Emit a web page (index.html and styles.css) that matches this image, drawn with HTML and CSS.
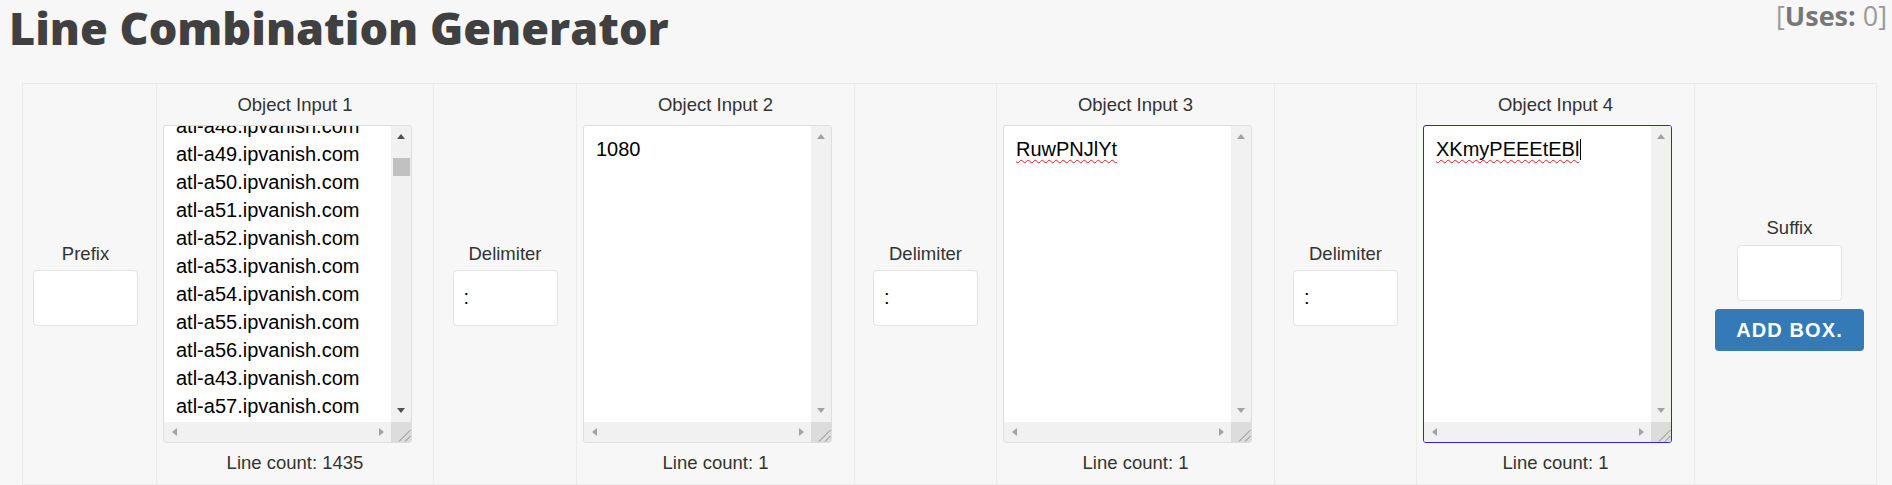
FILE: index.html
```html
<!DOCTYPE html>
<html lang="en">
<head>
    <meta charset="UTF-8">
    <title>Line Combination Generator</title>
    <link rel="stylesheet" href="styles.css">
</head>
<body>
    <div class="header">
        <h1 class="title">Line Combination Generator</h1>
        <div class="uses">[<b>Uses:</b> 0]</div>
    </div>

    <div class="generator">
        <!-- prefix -->
        <div class="cell cell-prefix">
            <label class="field-label" for="prefix">Prefix</label>
            <input class="small-input" type="text" id="prefix">
        </div>

        <!-- object 1 -->
        <div class="cell cell-object">
            <div class="field-label">Object Input 1</div>
            <div class="textbox">
                <div class="textbox-content"><div class="lines scrolled">atl-a48.ipvanish.com
atl-a49.ipvanish.com
atl-a50.ipvanish.com
atl-a51.ipvanish.com
atl-a52.ipvanish.com
atl-a53.ipvanish.com
atl-a54.ipvanish.com
atl-a55.ipvanish.com
atl-a56.ipvanish.com
atl-a43.ipvanish.com
atl-a57.ipvanish.com</div></div>
                <div class="vbar active">
                    <span class="sb-btn up"></span>
                    <div class="track"><div class="thumb"></div></div>
                    <span class="sb-btn down"></span>
                </div>
                <div class="hbar">
                    <span class="sb-btn left"></span>
                    <span class="sb-btn right"></span>
                </div>
                <div class="resizer">
                    <svg width="20" height="20" viewBox="0 0 20 20"><path d="M8 19.5 L19.5 8 M14 19.5 L19.5 14" stroke="#888" stroke-width="1" fill="none"/></svg>
                </div>
            </div>
            <div class="line-count">Line count: 1435</div>
        </div>

        <div class="cell">
            <label class="field-label">Delimiter</label>
            <input class="small-input" type="text" value=":">
        </div>

        <!-- object 2 -->
        <div class="cell cell-object">
            <div class="field-label">Object Input 2</div>
            <div class="textbox">
                <div class="textbox-content"><div class="lines">1080</div></div>
                <div class="vbar">
                    <span class="sb-btn up"></span>
                    <div class="track"></div>
                    <span class="sb-btn down"></span>
                </div>
                <div class="hbar">
                    <span class="sb-btn left"></span>
                    <span class="sb-btn right"></span>
                </div>
                <div class="resizer">
                    <svg width="20" height="20" viewBox="0 0 20 20"><path d="M8 19.5 L19.5 8 M14 19.5 L19.5 14" stroke="#888" stroke-width="1" fill="none"/></svg>
                </div>
            </div>
            <div class="line-count">Line count: 1</div>
        </div>

        <div class="cell">
            <label class="field-label">Delimiter</label>
            <input class="small-input" type="text" value=":">
        </div>

        <!-- object 3 -->
        <div class="cell cell-object">
            <div class="field-label">Object Input 3</div>
            <div class="textbox">
                <div class="textbox-content"><div class="lines"><span class="typo">RuwPNJlYt</span></div></div>
                <div class="vbar">
                    <span class="sb-btn up"></span>
                    <div class="track"></div>
                    <span class="sb-btn down"></span>
                </div>
                <div class="hbar">
                    <span class="sb-btn left"></span>
                    <span class="sb-btn right"></span>
                </div>
                <div class="resizer">
                    <svg width="20" height="20" viewBox="0 0 20 20"><path d="M8 19.5 L19.5 8 M14 19.5 L19.5 14" stroke="#888" stroke-width="1" fill="none"/></svg>
                </div>
            </div>
            <div class="line-count">Line count: 1</div>
        </div>

        <div class="cell">
            <label class="field-label">Delimiter</label>
            <input class="small-input" type="text" value=":">
        </div>

        <!-- object 4 (focused) -->
        <div class="cell cell-object">
            <div class="field-label">Object Input 4</div>
            <div class="textbox focused">
                <div class="textbox-content"><div class="lines"><span class="typo">XKmyPEEEtEBl</span><span class="caret"></span></div></div>
                <div class="vbar">
                    <span class="sb-btn up"></span>
                    <div class="track"></div>
                    <span class="sb-btn down"></span>
                </div>
                <div class="hbar">
                    <span class="sb-btn left"></span>
                    <span class="sb-btn right"></span>
                </div>
                <div class="resizer">
                    <svg width="20" height="20" viewBox="0 0 20 20"><path d="M8 19.5 L19.5 8 M14 19.5 L19.5 14" stroke="#888" stroke-width="1" fill="none"/></svg>
                </div>
            </div>
            <div class="line-count">Line count: 1</div>
        </div>

        <!-- suffix -->
        <div class="cell cell-suffix">
            <label class="field-label" for="suffix">Suffix</label>
            <input class="small-input" type="text" id="suffix">
            <button class="add-btn">ADD BOX.</button>
        </div>
    </div>
</body>
</html>
```

FILE: styles.css
```css
* {
    box-sizing: border-box;
}

body {
    margin: 0;
    padding: 0 5px 0 9px;
    background-color: #f7f7f7;
    color: #333;
    font-family: "Liberation Sans", Arial, sans-serif;
}

.header {
    display: flex;
    justify-content: space-between;
    align-items: flex-start;
}

.title {
    margin: 0;
    font-family: "Open Sans", sans-serif;
    font-weight: 800;
    font-size: 45px;
    line-height: 56px;
    color: #404040;
}

.uses {
    margin-top: 0;
    font-family: "Open Sans", sans-serif;
    font-size: 27px;
    line-height: 31px;
    color: #9a9a9a;
}

.uses b {
    color: #777;
}

/* main row of boxes */
.generator {
    display: grid;
    grid-template-columns: 134px 277px 143px 278px 142px 278px 142px 278px 182px;
    grid-template-rows: 401px;
    margin: 27px 10px 0 13px;
    border-top: 1px solid #ebebeb;
    border-left: 1px solid #ebebeb;
}

.cell {
    display: flex;
    flex-direction: column;
    align-items: center;
    justify-content: center;
    border-right: 1px solid #ebebeb;
    border-bottom: 1px solid #ebebeb;
}

.cell-prefix {
    padding-right: 8px;
}

.cell-suffix {
    padding-left: 8px;
}

.field-label {
    font-size: 18.5px;
    line-height: 22px;
    color: #333;
}

.small-input {
    width: 105px;
    height: 56px;
    margin-top: 5px;
    padding: 0 10px;
    border: 1px solid #e3e3e3;
    border-radius: 4px;
    background: white;
    font-family: "Liberation Sans", Arial, sans-serif;
    font-size: 20px;
    color: #000;
}

.cell-suffix .small-input {
    margin-top: 6px;
}

.add-btn {
    width: 149px;
    height: 42px;
    margin-top: 8px;
    padding: 0;
    border: none;
    border-radius: 4px;
    background-color: #337ab7;
    color: white;
    font-family: "Liberation Sans", Arial, sans-serif;
    font-weight: 700;
    font-size: 20px;
    letter-spacing: 1.1px;
    cursor: pointer;
}

/* object input */
.cell-object .field-label {
    margin-bottom: 9px;
}

.line-count {
    margin-top: 9px;
    font-size: 18.5px;
    line-height: 22px;
}

.textbox {
    align-self: flex-start;
    margin-left: 6px;
    width: 249px;
    height: 318px;
    display: grid;
    grid-template-columns: 1fr 20px;
    grid-template-rows: 1fr 20px;
    border: 1px solid #dedede;
    border-radius: 3px;
    background: white;
    overflow: hidden;
}

.textbox.focused {
    border-color: #3320e2;
}

.textbox-content {
    overflow: hidden;
}

.lines {
    padding: 9px 12px;
    font-size: 20px;
    line-height: 28px;
    white-space: pre;
    color: #000;
}

.lines.scrolled {
    margin-top: -23px;
}

.typo {
    text-decoration: underline wavy #e41b1b;
    text-decoration-skip-ink: none;
    text-decoration-thickness: 1px;
    text-underline-offset: 3px;
}

.caret {
    display: inline-block;
    width: 1px;
    height: 21px;
    margin-left: 1px;
    background: #000;
    vertical-align: -4px;
}

/* fake scrollbars */
.vbar {
    --arrow: #a3a3a3;
    display: flex;
    flex-direction: column;
    background: #f1f1f1;
}

.vbar.active {
    --arrow: #505050;
}

.hbar {
    --arrow: #a3a3a3;
    display: flex;
    justify-content: space-between;
    background: #f1f1f1;
}

.track {
    flex: 1;
}

.thumb {
    height: 18px;
    margin: 12px 1px 0 2px;
    background: #c1c1c1;
}

.sb-btn {
    flex: none;
    width: 20px;
    height: 20px;
    display: flex;
    align-items: center;
    justify-content: center;
}

.sb-btn::before {
    content: "";
    border-style: solid;
    border-color: transparent;
}

.sb-btn.up::before {
    border-width: 0 4.5px 5px;
    border-bottom-color: var(--arrow);
}

.sb-btn.down {
    padding-bottom: 4px;
}

.sb-btn.down::before {
    border-width: 5px 4.5px 0;
    border-top-color: var(--arrow);
}

.sb-btn.left::before {
    border-width: 4.5px 5px 4.5px 0;
    border-right-color: var(--arrow);
}

.sb-btn.right::before {
    border-width: 4.5px 0 4.5px 5px;
    border-left-color: var(--arrow);
}

.resizer {
    background: #dcdcdc;
}

.resizer svg {
    display: block;
}
```
